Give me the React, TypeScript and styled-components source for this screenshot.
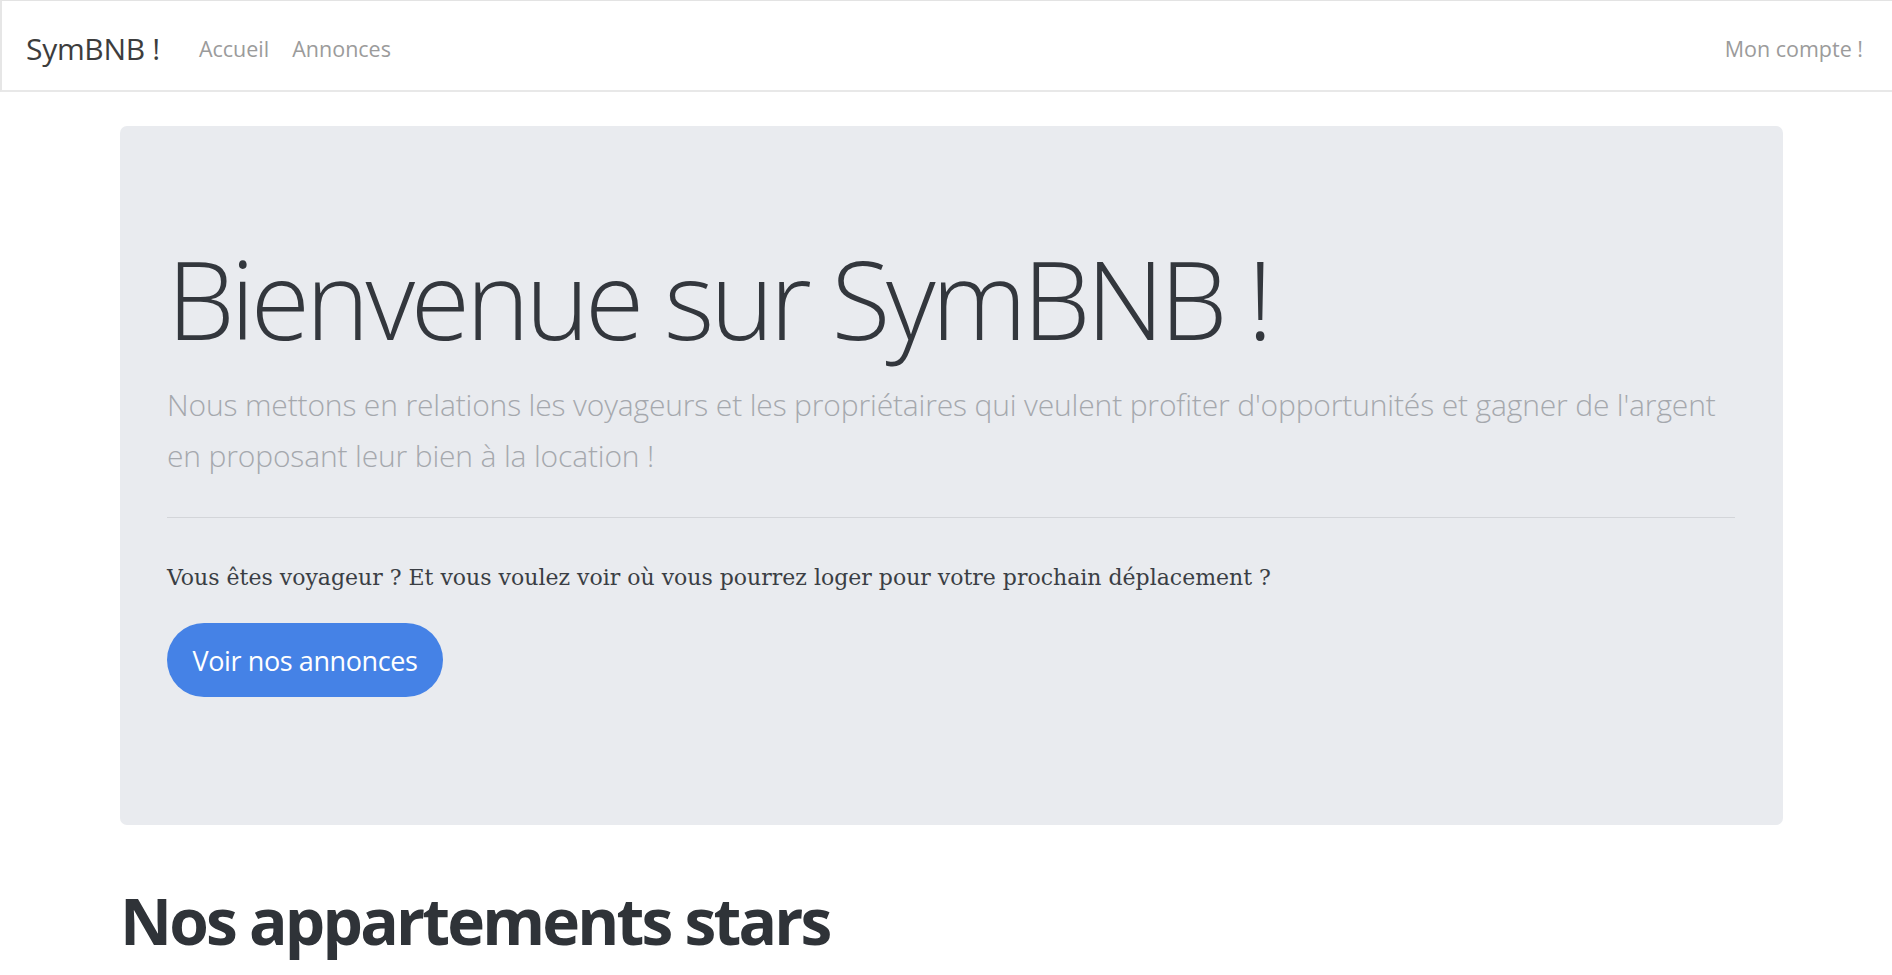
import React from "react";
import styled, { createGlobalStyle } from "styled-components";

const Global = createGlobalStyle`
  html, body {
    margin: 0;
    padding: 0;
    background: #ffffff;
  }
  body {
    font-family: "Open Sans", "Noto Sans", sans-serif;
    color: #343a40;
  }
  * { box-sizing: border-box; }
`;

const NavBar = styled.nav`
  height: 92px;
  display: flex;
  align-items: center;
  padding: 5px 29px 0 24px;
  background: #ffffff;
  border-top: 1px solid #e3e3e3;
  border-left: 2px solid #e6e6e6;
  border-bottom: 2px solid #e8e8e8;
`;

const Brand = styled.a`
  font-size: 30px;
  color: #3d3d3d;
  text-decoration: none;
  margin-right: 39px;
  letter-spacing: -0.3px;
`;

const NavLinks = styled.div`
  display: flex;
  gap: 23px;
  flex: 1;
`;

const NavLink = styled.a`
  font-size: 21.5px;
  color: #9b9b9b;
  text-decoration: none;
`;

const AccountLink = styled(NavLink)`
  margin-left: auto;
`;

const Container = styled.main`
  width: 1663px;
  margin: 34px 0 0 120px;
`;

const Jumbotron = styled.section`
  background: #e9ebef;
  border-radius: 7px;
  padding: 108px 48px 128px 47px;
`;

const Display = styled.h1`
  margin: 0;
  font-size: 108px;
  font-weight: 300;
  line-height: 1.2;
  color: #33373d;
  letter-spacing: -4.2px;
`;

const Lead = styled.p`
  margin: 15px 0 0;
  font-size: 30px;
  font-weight: 300;
  line-height: 51px;
  color: #a5a8ad;
  letter-spacing: -0.15px;
`;

const Rule = styled.hr`
  margin: 36px 0 0;
  border: 0;
  border-top: 1px solid #d3d5d9;
`;

const Question = styled.p`
  margin: 44px 0 0;
  font-family: "DejaVu Serif", "Liberation Serif", serif;
  font-size: 22px;
  line-height: 31.5px;
  color: #3a3e44;
`;

const PillButton = styled.a`
  margin-top: 30px;
  display: inline-flex;
  align-items: center;
  justify-content: center;
  height: 74px;
  width: 276px;
  border-radius: 37px;
  background: #4582e6;
  color: #ffffff;
  font-size: 27px;
  text-decoration: none;
  letter-spacing: -0.4px;
`;

const SectionTitle = styled.h2`
  margin: 58px 0 0;
  font-size: 64px;
  font-weight: 700;
  line-height: 1.2;
  color: #2f3338;
  letter-spacing: -2.8px;
`;

export default function App() {
  return (
    <>
      <Global />
      <NavBar>
        <Brand href="#">SymBNB !</Brand>
        <NavLinks>
          <NavLink href="#">Accueil</NavLink>
          <NavLink href="#">Annonces</NavLink>
        </NavLinks>
        <AccountLink href="#">Mon compte !</AccountLink>
      </NavBar>
      <Container>
        <Jumbotron>
          <Display>Bienvenue sur SymBNB !</Display>
          <Lead>
            Nous mettons en relations les voyageurs et les propriétaires qui veulent profiter
            d'opportunités et gagner de l'argent en proposant leur bien à la location !
          </Lead>
          <Rule />
          <Question>
            Vous êtes voyageur ? Et vous voulez voir où vous pourrez loger pour votre prochain
            déplacement ?
          </Question>
          <PillButton href="#">Voir nos annonces</PillButton>
        </Jumbotron>
        <SectionTitle>Nos appartements stars</SectionTitle>
      </Container>
    </>
  );
}
